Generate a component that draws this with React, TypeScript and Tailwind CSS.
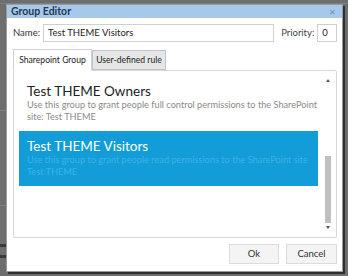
import React from "react";

export default function App() {
  const font = { fontFamily: 'Lato, "Open Sans", sans-serif' };
  return (
    <div className="w-[348px] h-[276px] bg-[#6e6e6e] overflow-hidden relative" style={font}>
      <div className="absolute left-0 top-[3px] w-[348px] h-px bg-[#7a8088]" />
      <div className="absolute left-0 top-[110px] w-[6px] h-px bg-[#808080]" />
      <div className="absolute left-0 top-[205px] w-[6px] h-px bg-[#808080]" />
      <div className="absolute left-0 top-[244px] w-[6px] h-[3px] bg-[#3a3a3a]" />
      <div className="absolute left-0 top-[255px] w-[6px] h-[3px] bg-[#3a3a3a]" />
      <div className="absolute left-[6px] top-[4px] w-[337px] h-[268px] bg-white border border-[#9a9a9a] shadow-[2px_2px_0_#2e2e2e] flex flex-col">
        <div className="h-[13px] bg-[#a6c8ea] flex items-center justify-between px-[4px]">
          <span className="text-[10.5px] font-bold text-[#233a55] leading-none">Group Editor</span>
          <span className="text-[8px] text-[#7a8ea6] leading-none mr-[2px]">✕</span>
        </div>
        <div className="flex items-center mt-[6px] pl-[6px] pr-[5px] h-[18px]">
          <span className="text-[9.5px] text-[#333] mr-[3px] whitespace-nowrap">Name:</span>
          <div className="w-[236px] h-[18px] border border-[#d0d0d0] flex items-center pl-[4px] text-[9.5px] text-[#222] whitespace-nowrap">Test THEME Visitors</div>
          <span className="text-[9.5px] text-[#444] ml-[7px] mr-[3px] whitespace-nowrap">Priority:</span>
          <div className="w-[20px] h-[18px] border border-[#d0d0d0] flex items-center pl-[4px] text-[9.5px] text-[#222]">0</div>
        </div>
        <div className="flex mt-[7px] pl-[6px] h-[22px] relative z-10">
          <div className="w-[79px] h-[22px] border border-[#cfd3d8] border-b-white bg-white flex items-center justify-center text-[8.6px] text-[#222] whitespace-nowrap">Sharepoint Group</div>
          <div className="w-[74px] h-[20px] mt-[1px] border border-[#bfc3c8] bg-[#e6e6e6] flex items-center justify-center text-[8.6px] text-[#222] whitespace-nowrap">User-defined rule</div>
        </div>
        <div className="ml-[6px] w-[324px] h-[168px] -mt-[1px] border border-[#d4d8de] rounded-[2px] flex">
          <div className="flex-1 min-w-0 overflow-hidden flex flex-col pl-[5px] pt-[13px]">
            <div className="pl-[8px]">
              <div className="text-[13.5px] leading-[15px] text-[#222] whitespace-nowrap">Test THEME Owners</div>
              <div className="text-[9.2px] leading-[12px] text-[#8a8a8a] whitespace-nowrap">Use this group to grant people full control permissions to the SharePoint<br />site: Test THEME</div>
            </div>
            <div className="mt-[8px] w-[299px] h-[55px] bg-[#129dd8] pl-[8px] pt-[8px]">
              <div className="text-[13.5px] leading-[15px] text-white whitespace-nowrap">Test THEME Visitors</div>
              <div className="text-[9.2px] leading-[12px] text-[#3cb2e6] whitespace-nowrap">Use this group to grant people read permissions to the SharePoint site<br />Test THEME</div>
            </div>
          </div>
          <div className="w-[10px] shrink-0 flex flex-col items-center mr-[3px] pt-[8px] pb-[8px]">
            <div className="w-0 h-0 border-l-[2px] border-r-[2px] border-b-[3px] border-l-transparent border-r-transparent border-b-[#555]" />
            <div className="flex-1" />
            <div className="w-[6px] h-[67px] bg-[#c0c0c0]" />
            <div className="h-[3px]" />
            <div className="w-0 h-0 border-l-[2px] border-r-[2px] border-t-[3px] border-l-transparent border-r-transparent border-t-[#555]" />
          </div>
        </div>
        <div className="flex justify-end mt-[6px] pr-[5px] gap-[7px]">
          <div className="w-[50px] h-[20px] border border-[#dcdcdc] bg-[#f4f4f4] flex items-center justify-center text-[9.5px] text-[#333]">Ok</div>
          <div className="w-[51px] h-[20px] border border-[#dcdcdc] bg-[#f4f4f4] flex items-center justify-center text-[9.5px] text-[#333]">Cancel</div>
        </div>
      </div>
    </div>
  );
}
